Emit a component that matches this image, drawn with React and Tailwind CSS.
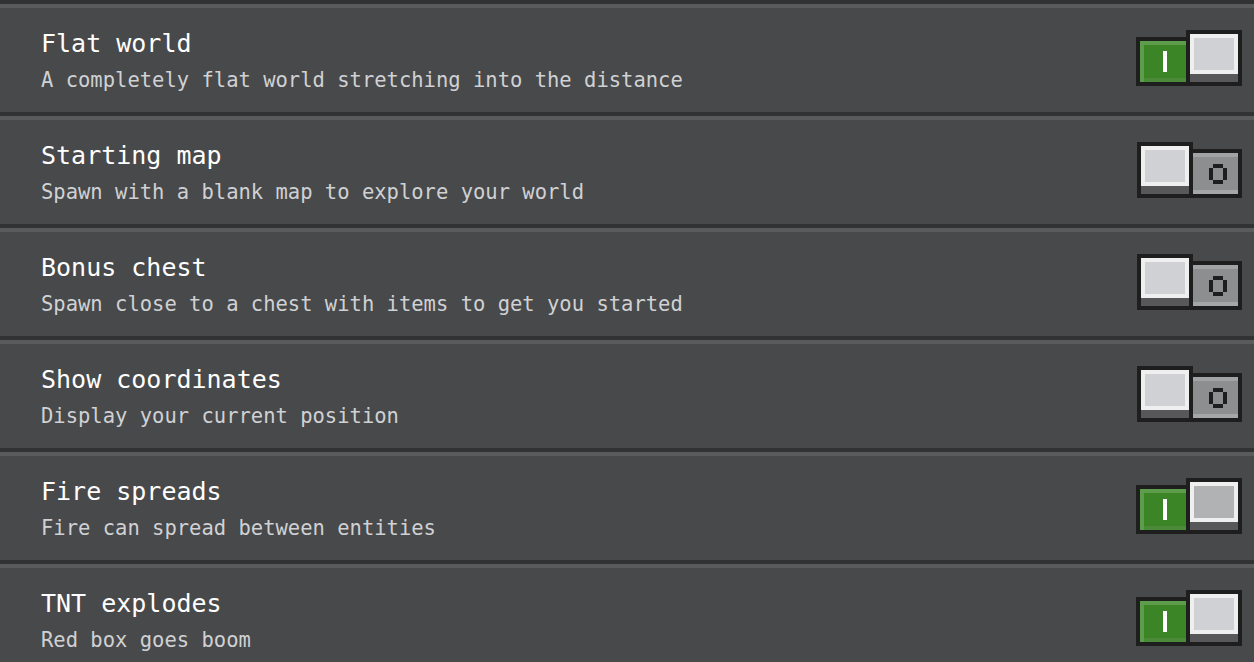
import React from 'react';

const settings = [
  { title: 'Flat world', desc: 'A completely flat world stretching into the distance', on: true },
  { title: 'Starting map', desc: 'Spawn with a blank map to explore your world', on: false },
  { title: 'Bonus chest', desc: 'Spawn close to a chest with items to get you started', on: false },
  { title: 'Show coordinates', desc: 'Display your current position', on: false },
  { title: 'Fire spreads', desc: 'Fire can spread between entities', on: true, hover: true },
  { title: 'TNT explodes', desc: 'Red box goes boom', on: true },
];

const mono = { fontFamily: '"DejaVu Sans Mono", "Liberation Mono", monospace' };

// Raised square knob
const Knob = ({ hover }) => (
  <div className="relative z-10 w-[56px] h-[56px] bg-[#1e1e1f] p-[4px] flex flex-col shrink-0">
    <div
      className={
        hover
          ? 'h-[40px] border-4 border-[#efeff0] bg-[#b1b2b4]'
          : 'h-[40px] border-4 border-[#efeff0] bg-[#d0d1d4]'
      }
    />
    <div className="h-[8px] bg-[#58585a]" />
  </div>
);

const OnTrack = () => (
  <div className="w-[54px] h-[49px] bg-[#1e1e1f] p-[4px] shrink-0">
    <div className="relative h-full bg-[#3c8527] border-t-4 border-l-4 border-[#5d9c4a] flex items-center justify-center">
      <div className="absolute left-0 right-0 bottom-0 h-[4px] bg-[#4a8a38]" />
      <div className="w-[4px] h-[21px] bg-white -mt-[4px]" />
    </div>
  </div>
);

const OffTrack = () => (
  <div className="-ml-[4px] w-[53px] h-[49px] bg-[#1e1e1f] p-[4px] shrink-0">
    <div className="h-full bg-[#8d8e90] border-t-4 border-b-4 border-t-[#a2a3a5] border-b-[#a5a6a8] flex items-center justify-center pl-[4px]">
      <svg width="18" height="20" viewBox="0 0 18 20">
        <rect x="4" y="0" width="10" height="4" fill="#1e1e1f" />
        <rect x="4" y="16" width="10" height="4" fill="#1e1e1f" />
        <rect x="0" y="4" width="4" height="12" fill="#1e1e1f" />
        <rect x="14" y="4" width="4" height="12" fill="#1e1e1f" />
      </svg>
    </div>
  </div>
);

const Toggle = ({ on, hover }) => (
  <div className="flex items-end mt-[22px] h-[56px]">
    {on ? (
      <>
        <OnTrack />
        <div className="-ml-[4px]">
          <Knob hover={hover} />
        </div>
      </>
    ) : (
      <>
        <Knob />
        <OffTrack />
      </>
    )}
  </div>
);

export default function App() {
  return (
    <div className="w-[1254px] h-[662px] overflow-hidden bg-[#48494a]" style={mono}>
      {settings.map((s) => (
        <div key={s.title} className="border-t-4 border-[#313233]">
          <div className="border-t-4 border-[#5a5b5c] h-[108px] flex justify-between pl-[41px] pr-[12px]">
            <div className="pt-[21px]">
              <div className="text-[25px] leading-[30px] text-white">{s.title}</div>
              <div className="mt-[9px] text-[20.5px] leading-[24px] text-[#d0d1d4]">{s.desc}</div>
            </div>
            <Toggle on={s.on} hover={s.hover} />
          </div>
        </div>
      ))}
    </div>
  );
}
